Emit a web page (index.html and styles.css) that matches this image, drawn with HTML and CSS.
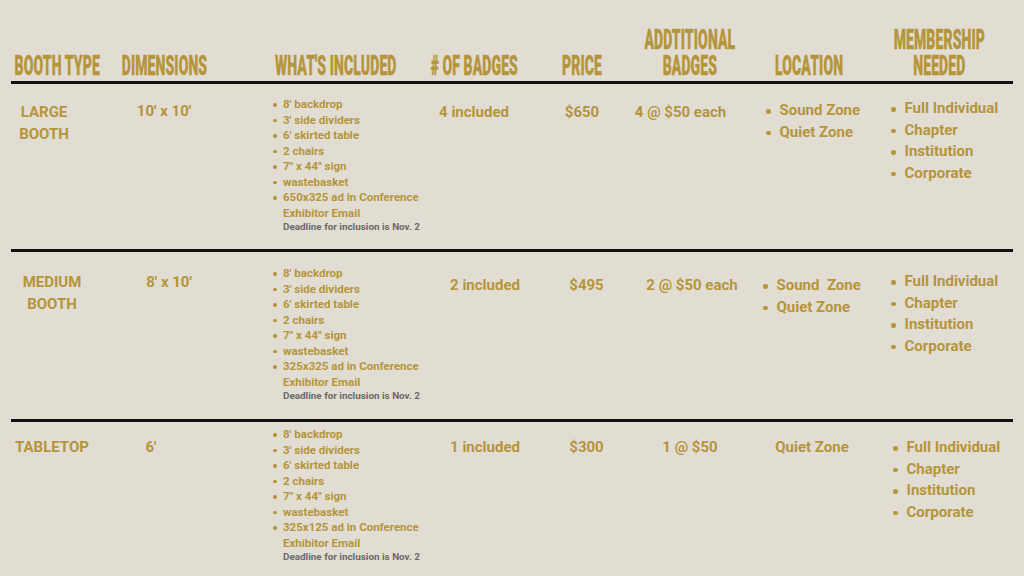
FILE: index.html
```html
<!DOCTYPE html>
<html lang="en">
<head>
<meta charset="utf-8">
<title>Booth Options</title>
<link rel="stylesheet" href="styles.css">
</head>
<body>
<div class="table">
  <div class="row head">
    <div class="cell"><span class="h">BOOTH TYPE</span></div>
    <div class="cell"><span class="h">DIMENSIONS</span></div>
    <div class="cell left"><span class="h h-left">WHAT'S INCLUDED</span></div>
    <div class="cell"><span class="h"># OF BADGES</span></div>
    <div class="cell"><span class="h">PRICE</span></div>
    <div class="cell"><span class="h">ADDTITIONAL<br>BADGES</span></div>
    <div class="cell"><span class="h">LOCATION</span></div>
    <div class="cell"><span class="h">MEMBERSHIP<br>NEEDED</span></div>
  </div>

  <div class="row r1">
    <div class="cell v type t1">LARGE<br>BOOTH</div>
    <div class="cell v dim">10′ x 10′</div>
    <div class="cell inc">
      <ul class="items">
        <li>8′ backdrop</li>
        <li>3′ side dividers</li>
        <li>6′ skirted table</li>
        <li>2 chairs</li>
        <li>7″ x 44″ sign</li>
        <li>wastebasket</li>
        <li>650x325 ad in Conference<br>Exhibitor Email</li>
      </ul>
      <p class="note">Deadline for inclusion is Nov. 2</p>
    </div>
    <div class="cell v">4 included</div>
    <div class="cell v">$650</div>
    <div class="cell v add1">4 @ $50 each</div>
    <div class="cell loc loc1">
      <ul class="big">
        <li>Sound Zone</li>
        <li>Quiet Zone</li>
      </ul>
    </div>
    <div class="cell mem mem1">
      <ul class="big">
        <li>Full Individual</li>
        <li>Chapter</li>
        <li>Institution</li>
        <li>Corporate</li>
      </ul>
    </div>
  </div>

  <div class="row r2">
    <div class="cell v type t2">MEDIUM<br>BOOTH</div>
    <div class="cell v dim d2">8′ x 10′</div>
    <div class="cell inc">
      <ul class="items">
        <li>8′ backdrop</li>
        <li>3′ side dividers</li>
        <li>6′ skirted table</li>
        <li>2 chairs</li>
        <li>7″ x 44″ sign</li>
        <li>wastebasket</li>
        <li>325x325 ad in Conference<br>Exhibitor Email</li>
      </ul>
      <p class="note">Deadline for inclusion is Nov. 2</p>
    </div>
    <div class="cell v shift22">2 included</div>
    <div class="cell v shift9">$495</div>
    <div class="cell v shift4">2 @ $50 each</div>
    <div class="cell loc loc2">
      <ul class="big">
        <li>Sound&nbsp; Zone</li>
        <li>Quiet Zone</li>
      </ul>
    </div>
    <div class="cell mem mem1">
      <ul class="big">
        <li>Full Individual</li>
        <li>Chapter</li>
        <li>Institution</li>
        <li>Corporate</li>
      </ul>
    </div>
  </div>

  <div class="row r3">
    <div class="cell v type t3">TABLETOP</div>
    <div class="cell v dim d3">6′</div>
    <div class="cell inc">
      <ul class="items">
        <li>8′ backdrop</li>
        <li>3′ side dividers</li>
        <li>6′ skirted table</li>
        <li>2 chairs</li>
        <li>7″ x 44″ sign</li>
        <li>wastebasket</li>
        <li>325x125 ad in Conference<br>Exhibitor Email</li>
      </ul>
      <p class="note">Deadline for inclusion is Nov. 2</p>
    </div>
    <div class="cell v shift22">1 included</div>
    <div class="cell v shift9">$300</div>
    <div class="cell v">1 @ $50</div>
    <div class="cell v shift6">Quiet Zone</div>
    <div class="cell mem mem3">
      <ul class="big">
        <li>Full Individual</li>
        <li>Chapter</li>
        <li>Institution</li>
        <li>Corporate</li>
      </ul>
    </div>
  </div>
</div>
</body>
</html>
```

FILE: styles.css
```css
html, body {
  margin: 0;
  padding: 0;
  background: #e1ddd3;
}

body {
  width: 1024px;
  height: 576px;
  overflow: hidden;
  font-family: Roboto, "Liberation Sans", sans-serif;
  font-weight: 700;
  color: #b5953b;
}

.table {
  margin-left: 11px;
  width: 1002px;
}

.row {
  display: grid;
  grid-template-columns: 93px 120px 206px 88px 128px 88px 150px 110px;
  box-sizing: border-box;
}

.head {
  height: 84px;
  border-bottom: 3px solid #121212;
  padding-bottom: 3px;
}

.r1 {
  height: 168px;
  border-bottom: 3px solid #121212;
}

.r2 {
  height: 170px;
  border-bottom: 3px solid #121212;
}

.r3 {
  height: 154px;
}

.cell {
  display: flex;
  flex-direction: column;
  align-items: center;
  justify-content: flex-start;
  white-space: nowrap;
  min-width: 0;
}

.head .cell {
  justify-content: flex-end;
}

.head .cell.left {
  align-items: flex-start;
  padding-left: 51px;
}

.h {
  display: block;
  font-family: Roboto, "Liberation Sans", sans-serif;
  font-weight: 900;
  font-size: 28px;
  line-height: 25.5px;
  text-align: center;
  transform: scaleX(0.5);
  transform-origin: 50% 50%;
  letter-spacing: 0.2px;
  -webkit-text-stroke: 0.35px #b5953b;
}

.h-left {
  transform-origin: 0 50%;
  text-align: left;
}

/* Values */
.v {
  font-size: 15px;
  line-height: 21.5px;
  text-align: center;
}

.r1 .cell { padding-top: 18px; }
.r2 .cell { padding-top: 23px; }
.r3 .cell { padding-top: 15px; }

.r1 .dim { padding-top: 17px; }
.r2 .type, .r2 .dim { padding-top: 20px; }

.t1 { padding-right: 27px; }
.t2 { padding-right: 11px; }
.t3 { align-items: flex-start; padding-left: 4px; }
.d2 { padding-left: 10px; }
.d3 { padding-right: 26px; }
.add1 { padding-right: 19px; }
.shift22 { padding-left: 22px; }
.shift9 { padding-left: 9px; }
.shift6 { padding-left: 6px; }
.shift4 { padding-left: 4px; }

/* What's included list */
.cell.inc {
  align-items: flex-start;
}

.r1 .inc { padding-top: 13px; }
.r2 .inc { padding-top: 14px; }
.r3 .inc { padding-top: 5px; }

ul {
  list-style: none;
  margin: 0;
  padding: 0;
}

.items li {
  display: flex;
  align-items: flex-start;
  font-size: 11.5px;
  line-height: 15.5px;
  padding-left: 49px;
}

.items li::before {
  content: "";
  flex: none;
  width: 3.5px;
  height: 3.5px;
  border-radius: 50%;
  background: #b5953b;
  margin-top: 6px;
  margin-right: 6.5px;
}

.note {
  margin: 0;
  padding-left: 59px;
  font-size: 9.9px;
  line-height: 12px;
  color: #6c6a66;
}

/* Location / membership bullet lists */
.cell.loc, .cell.mem {
  align-items: flex-start;
}

.big li {
  display: flex;
  align-items: flex-start;
  font-size: 15px;
  line-height: 21.5px;
}

.big li::before {
  content: "";
  flex: none;
  width: 4.5px;
  height: 4.5px;
  border-radius: 50%;
  background: #b5953b;
  margin-top: 9px;
  margin-right: 9px;
}

.r1 .loc1 { padding-top: 16px; padding-left: 32px; }
.r2 .loc2 { padding-top: 23px; padding-left: 29px; }
.r1 .mem1 { padding-top: 14px; padding-left: 7px; }
.r2 .mem1 { padding-top: 19px; padding-left: 7px; }
.r3 .mem3 { padding-top: 15px; padding-left: 9px; }
```
